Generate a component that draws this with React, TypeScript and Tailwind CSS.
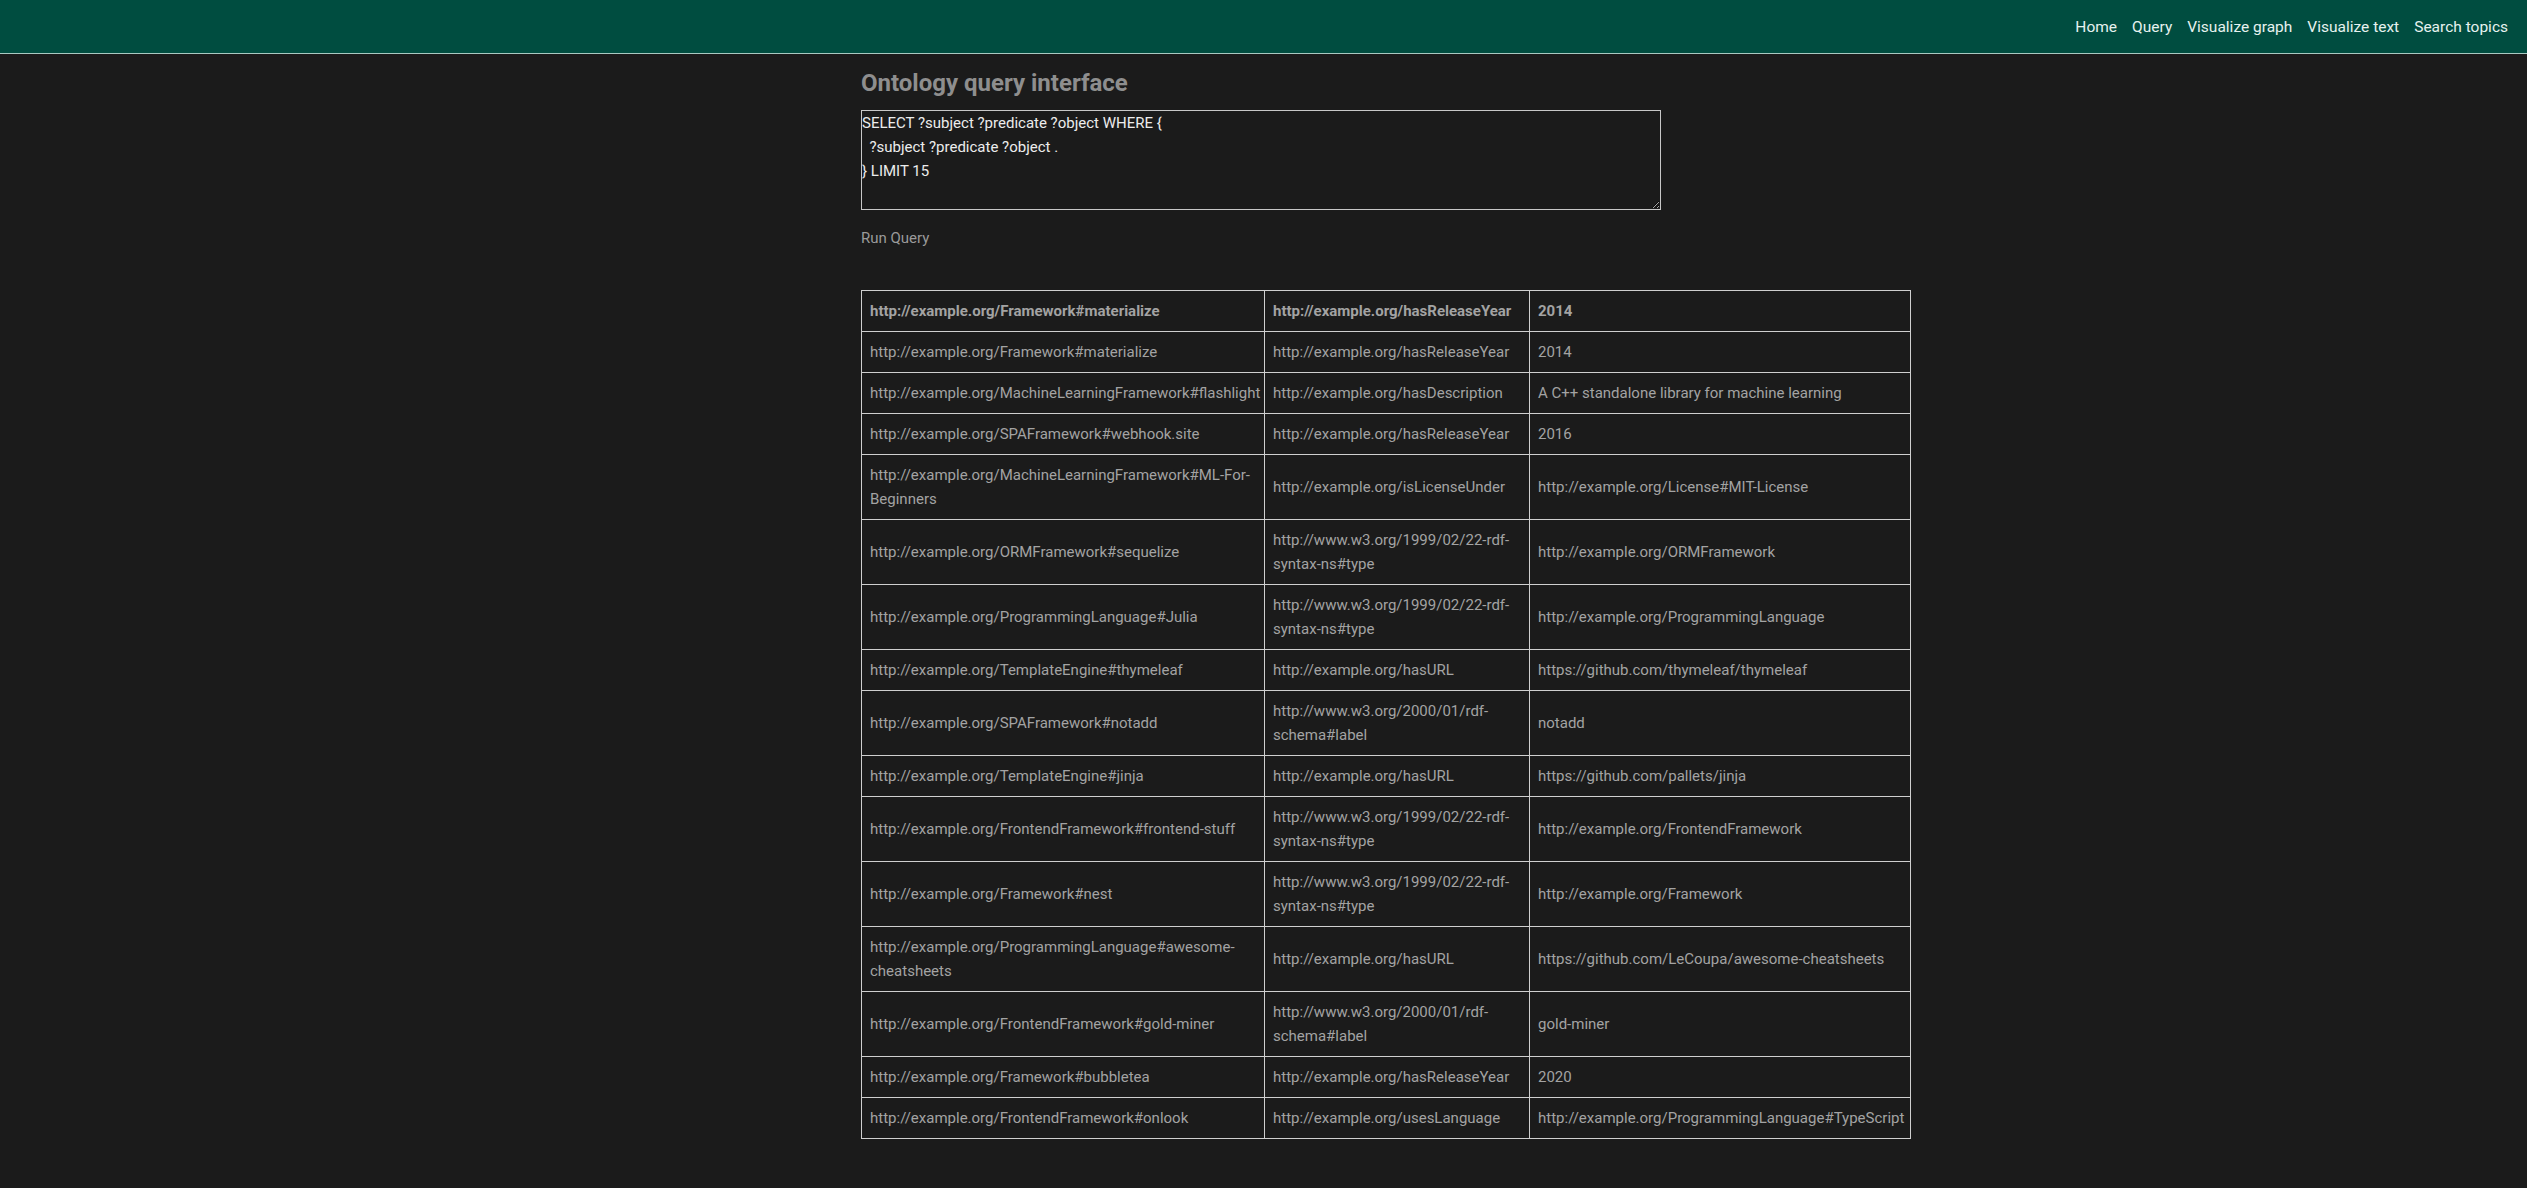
import React from 'react';

type Row = [string, string, string];

const rows: Row[] = [
  ['http://example.org/Framework#materialize', 'http://example.org/hasReleaseYear', '2014'],
  ['http://example.org/MachineLearningFramework#flashlight', 'http://example.org/hasDescription', 'A C++ standalone library for machine learning'],
  ['http://example.org/SPAFramework#webhook.site', 'http://example.org/hasReleaseYear', '2016'],
  ['http://example.org/MachineLearningFramework#ML-For-Beginners', 'http://example.org/isLicenseUnder', 'http://example.org/License#MIT-License'],
  ['http://example.org/ORMFramework#sequelize', 'http://www.w3.org/1999/02/22-rdf-syntax-ns#type', 'http://example.org/ORMFramework'],
  ['http://example.org/ProgrammingLanguage#Julia', 'http://www.w3.org/1999/02/22-rdf-syntax-ns#type', 'http://example.org/ProgrammingLanguage'],
  ['http://example.org/TemplateEngine#thymeleaf', 'http://example.org/hasURL', 'https://github.com/thymeleaf/thymeleaf'],
  ['http://example.org/SPAFramework#notadd', 'http://www.w3.org/2000/01/rdf-schema#label', 'notadd'],
  ['http://example.org/TemplateEngine#jinja', 'http://example.org/hasURL', 'https://github.com/pallets/jinja'],
  ['http://example.org/FrontendFramework#frontend-stuff', 'http://www.w3.org/1999/02/22-rdf-syntax-ns#type', 'http://example.org/FrontendFramework'],
  ['http://example.org/Framework#nest', 'http://www.w3.org/1999/02/22-rdf-syntax-ns#type', 'http://example.org/Framework'],
  ['http://example.org/ProgrammingLanguage#awesome-cheatsheets', 'http://example.org/hasURL', 'https://github.com/LeCoupa/awesome-cheatsheets'],
  ['http://example.org/FrontendFramework#gold-miner', 'http://www.w3.org/2000/01/rdf-schema#label', 'gold-miner'],
  ['http://example.org/Framework#bubbletea', 'http://example.org/hasReleaseYear', '2020'],
  ['http://example.org/FrontendFramework#onlook', 'http://example.org/usesLanguage', 'http://example.org/ProgrammingLanguage#TypeScript'],
];

const header: Row = ['http://example.org/Framework#materialize', 'http://example.org/hasReleaseYear', '2014'];

const query = 'SELECT ?subject ?predicate ?object WHERE {\n  ?subject ?predicate ?object .\n} LIMIT 15';

const navLinks = ['Home', 'Query', 'Visualize graph', 'Visualize text', 'Search topics'];

const App: React.FC = () => {
  return (
    <div className="min-h-screen bg-[#1b1b1b] font-['Roboto',sans-serif] text-[15px]">
      <nav className="h-[54px] bg-[#004d40] border-b border-[#a9c9c1] flex items-center justify-end gap-[15px] pr-[19px]">
        {navLinks.map((link) => (
          <a key={link} href="#" className="text-[#e6f2ef] text-[15.5px] leading-6">
            {link}
          </a>
        ))}
      </nav>

      <main className="w-[805px] mx-auto pt-[15px]">
        <h1 className="text-[24px] leading-[28px] font-bold text-[#8e8e8e] mb-[13px]">Ontology query interface</h1>

        <textarea
          defaultValue={query}
          className="block w-[800px] h-[100px] border border-[#c8c8c8] bg-transparent text-[#ececec] p-0 leading-6 outline-none"
        />

        <button className="block mt-[16px] leading-6 text-[#9a9a9a] bg-transparent">Run Query</button>

        <table className="mt-10 table-fixed w-[1049px] border-collapse text-[#a3a3a3]">
          <colgroup>
            <col className="w-[403px]" />
            <col className="w-[265px]" />
            <col className="w-[381px]" />
          </colgroup>
          <thead>
            <tr>
              {header.map((h, i) => (
                <th key={i} className="border border-[#cfcfcf] px-2 py-2 leading-6 text-left font-bold">
                  {h}
                </th>
              ))}
            </tr>
          </thead>
          <tbody>
            {rows.map((row, r) => (
              <tr key={r}>
                {row.map((cell, c) => (
                  <td key={c} className="border border-[#cfcfcf] px-2 py-2 leading-6 align-middle">
                    {cell}
                  </td>
                ))}
              </tr>
            ))}
          </tbody>
        </table>
      </main>
    </div>
  );
};

export default App;
